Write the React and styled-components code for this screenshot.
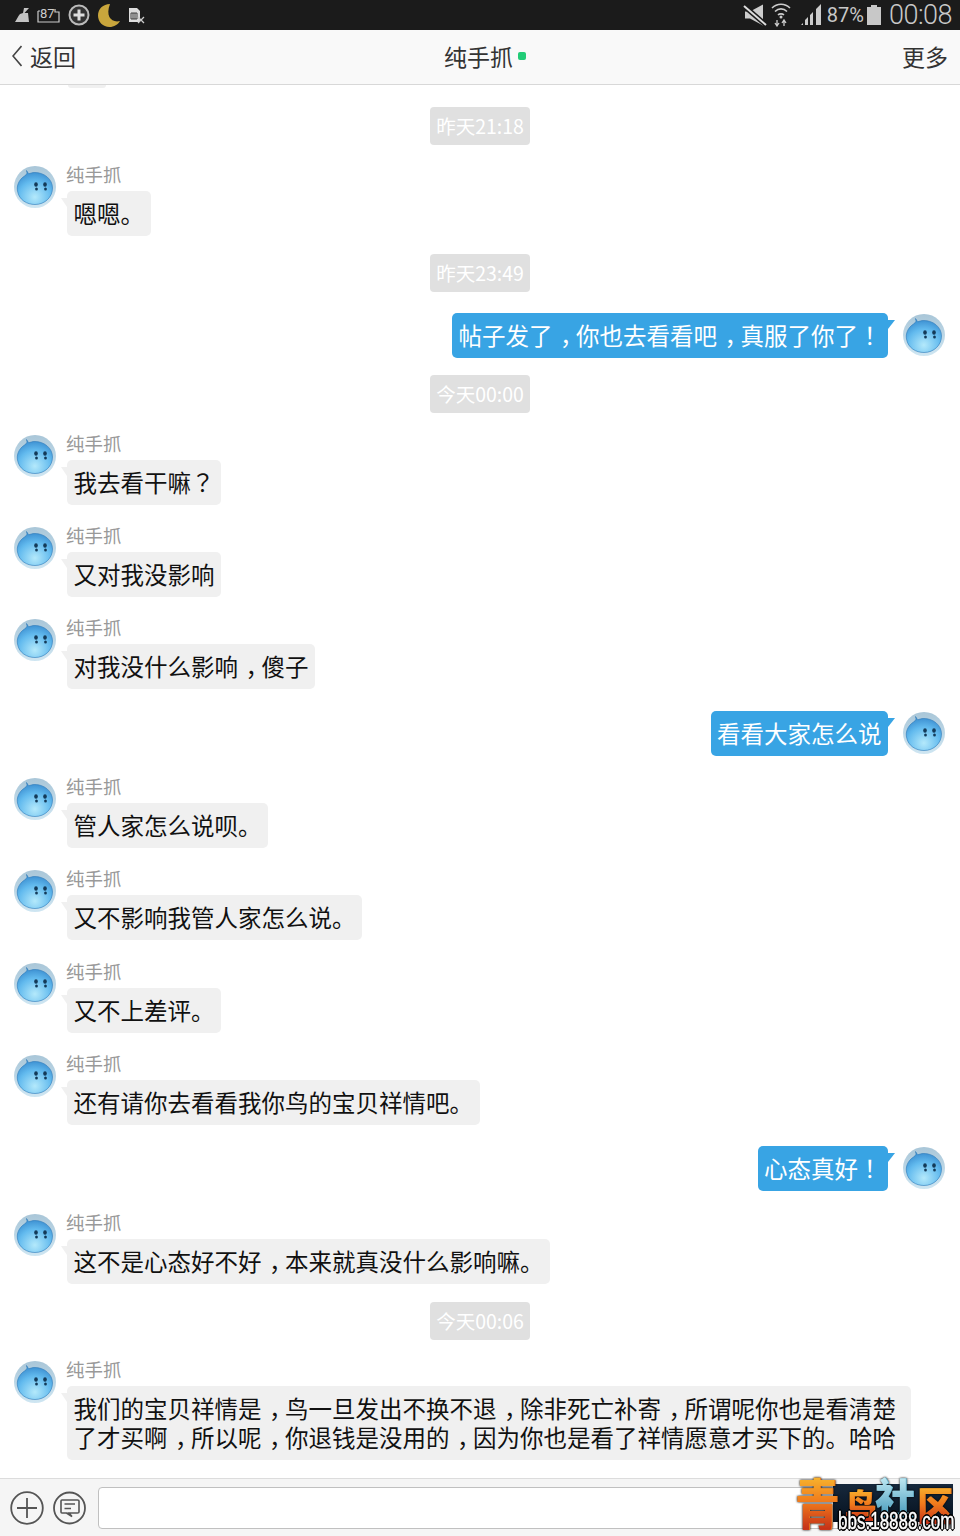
import React from 'react';
import styled, { createGlobalStyle } from 'styled-components';

const CJK = `"Noto Sans CJK SC", "Noto Sans", sans-serif`;

const GlobalStyle = createGlobalStyle`
  html, body {
    margin: 0;
    padding: 0;
    background: #fff;
    overflow: hidden;
  }
  * { box-sizing: border-box; }
`;

const Screen = styled.div`
  position: relative;
  width: 960px;
  height: 1536px;
  display: flex;
  flex-direction: column;
  font-family: ${CJK};
  overflow: hidden;
`;

/* --- status bar --- */
const StatusBar = styled.div`
  height: 30px;
  flex: none;
  background: #1b1b1b;
  color: #c4c4c4;
  display: flex;
  align-items: center;
  justify-content: space-between;
  padding: 0 8px 0 14px;
`;
const StatusGroup = styled.div`
  display: flex;
  align-items: center;
  gap: ${(p) => p.$gap}px;
`;
const StatusIcon = styled.span`
  display: flex;
  margin-right: ${(p) => p.$right}px;
`;
const Percent = styled.span`
  font-family: Roboto, sans-serif;
  font-size: 20px;
  color: #c8c8c8;
  margin-right: 3px;
`;
const Clock = styled.span`
  font-family: Roboto, sans-serif;
  font-weight: 300;
  font-size: 27px;
  line-height: 30px;
  letter-spacing: -0.5px;
  color: #c8c8c8;
  margin-left: 8px;
`;

/* --- nav --- */
const NavBar = styled.div`
  height: 55px;
  flex: none;
  background: #f9f9f9;
  border-bottom: 1px solid #d8d8d8;
  display: flex;
  align-items: center;
  justify-content: space-between;
  padding: 0 12px 2px 12px;
  color: #333;
  font-size: 23px;
`;
const NavBack = styled.div`
  display: flex;
  align-items: center;
  gap: 8px;
  width: 120px;
`;
const NavTitle = styled.div`
  display: flex;
  align-items: center;
  gap: 5px;
  margin-left: 10px;
`;
const OnlineDot = styled.span`
  width: 8px;
  height: 8px;
  border-radius: 2px;
  background: #22cc77;
`;
const NavMore = styled.div`
  width: 120px;
  text-align: right;
`;

/* --- messages --- */
const MessageList = styled.div`
  flex: 1;
  min-height: 0;
  overflow: hidden;
  display: flex;
  flex-direction: column;
  background: #fff;
`;
const ClippedBubble = styled.div`
  flex: none;
  width: 38px;
  height: 3px;
  margin-left: 68px;
  background: #f0f0f0;
  border-radius: 0 0 4px 4px;
`;
const TimePill = styled.div`
  flex: none;
  align-self: center;
  width: 100px;
  height: 38px;
  margin-top: ${(p) => p.$top}px;
  border-radius: 4px;
  background: #e0e0e0;
  color: #fff;
  font-size: 19.5px;
  line-height: 38px;
  text-align: center;
  white-space: nowrap;
`;
const Row = styled.div`
  flex: none;
  display: flex;
  flex-direction: ${(p) => (p.$mine ? 'row-reverse' : 'row')};
  align-items: flex-start;
  gap: ${(p) => (p.$mine ? 15 : 11)}px;
  padding: 0 15px 0 14px;
  margin-top: ${(p) => p.$top}px;
`;
const AvatarSlot = styled.div`
  width: 42px;
  height: 42px;
  flex: none;
  margin-top: ${(p) => (p.$mine ? 1 : 0)}px;
`;
const MessageBody = styled.div`
  display: flex;
  flex-direction: column;
  align-items: flex-start;
  max-width: 844px;
`;
const Name = styled.div`
  height: 25px;
  margin-left: -1px;
  font-size: 18.500px;
  line-height: 17px;
  color: #999;
`;
const Bubble = styled.div`
  position: relative;
  padding: 7.750px 6.500px;
  border-radius: 5px;
  font-size: 23.500px;
  line-height: 29px;
  background: ${(p) => (p.$mine ? '#38a4e4' : '#f0f0f0')};
  color: ${(p) => (p.$mine ? '#fff' : '#111')};
  &::before {
    content: '';
    position: absolute;
    top: 7px;
    ${(p) => (p.$mine ? 'right: -7px;' : 'left: -6px;')}
    border-top: 9px solid ${(p) => (p.$mine ? '#38a4e4' : '#f0f0f0')};
    ${(p) => (p.$mine ? 'border-right: 7px solid transparent;' : 'border-left: 6px solid transparent;')}
  }
`;
/* the phone's font sets the comma in the middle of its cell */
const Comma = styled.span`
  display: inline-block;
  width: 1em;
  transform: translateX(0.32em);
`;
const Bang = styled.span`
  font-family: "Noto Sans CJK TC", sans-serif;
`;

/* --- composer --- */
const Composer = styled.div`
  height: 58px;
  flex: none;
  background: #f5f5f5;
  border-top: 1px solid #dcdcdc;
  display: flex;
  align-items: center;
  padding: 0 10px;
`;
const ComposerIcons = styled.div`
  display: flex;
  align-items: center;
  gap: 9px;
  margin-right: 12px;
`;
const ComposerInput = styled.div`
  flex: 1;
  height: 42px;
  margin-top: 1px;
  background: #fff;
  border: 1px solid #c0c0c0;
  border-radius: 4px;
`;

/* --- watermark --- */
const Watermark = styled.div`
  position: absolute;
  left: 795px;
  top: 1474px;
  width: 160px;
  height: 57px;
  &::before {
    content: '';
    position: absolute;
    left: 38px;
    top: 10px;
    width: 120px;
    height: 38px;
    background: linear-gradient(#16283c, #06121f);
  }
`;
const LogoTitle = styled.div`
  position: relative;
  display: flex;
  align-items: flex-start;
  font-weight: 900;
  white-space: nowrap;
`;
const LogoChar = styled.span`
  flex: none;
  width: ${(p) => p.$w}px;
  margin-left: ${(p) => p.$left}px;
  margin-top: ${(p) => p.$top}px;
  font-size: ${(p) => p.$size}px;
  line-height: ${(p) => p.$size}px;
  text-align: center;
  transform: scaleY(${(p) => p.$stretch});
  transform-origin: top;
  background: linear-gradient(${(p) => (p.$cool ? '#c8eef6, #3d94b8' : '#f8bb30, #f07a1c 50%, #c42e18')});
  -webkit-background-clip: text;
  background-clip: text;
  color: transparent;
  filter: drop-shadow(1px 0 0 ${(p) => (p.$cool ? '#6cb8d2' : '#e8761c')}) drop-shadow(0 0 1px #000);
`;
const LogoUrl = styled.div`
  position: absolute;
  left: 43px;
  top: 34px;
  font-family: "Liberation Sans", sans-serif;
  font-size: 23px;
  line-height: 26px;
  color: #fff;
  -webkit-text-stroke: 0.4px #fff;
  text-shadow: -2px 0 #000, 2px 0 #000, 0 2px #000, 0 -2px #000, -1px -1px #000, 1px 1px #000, 1px -1px #000, -1px 1px #000;
  white-space: nowrap;
  transform: scaleX(0.74);
  transform-origin: left;
`;

/* --- drawn bits --- */
const Avatar = ({ id }) => (
  <svg width="42" height="42" viewBox="0 0 42 42">
    <defs>
      <linearGradient id={`rim${id}`} x1="0" y1="0" x2="0" y2="1">
        <stop offset="0%" stopColor="#a9c6d8" />
        <stop offset="100%" stopColor="#cfe6f2" />
      </linearGradient>
      <radialGradient id={`blob${id}`} cx="50%" cy="78%" r="85%">
        <stop offset="0%" stopColor="#b4e9fb" />
        <stop offset="55%" stopColor="#62baee" />
        <stop offset="100%" stopColor="#2e7fc6" />
      </radialGradient>
    </defs>
    <circle cx="21" cy="21" r="21" fill={`url(#rim${id})`} />
    <path
      d="M12.500 4.500 C13.500 7 13 8.500 10.500 10 C4.500 14 2.500 20 3.500 25 C5 34 13 38.500 21 38.500 C31 38.500 38.500 31 38.500 22 C38.500 13 30 6.500 21 6.500 C18 6.500 16.500 7.200 15 7.800 C14 7 13 5.500 12.500 4.500 Z"
      fill={`url(#blob${id})`}
      stroke="#2b78b8"
      strokeWidth="0.600"
    />
    <ellipse cx="22" cy="18.500" rx="1.800" ry="2.200" fill="#143a58" />
    <ellipse cx="31" cy="18.500" rx="1.800" ry="2.200" fill="#143a58" />
    <ellipse cx="22.500" cy="23" rx="1.400" ry="1.600" fill="#143a58" />
    <ellipse cx="31.500" cy="23" rx="1.400" ry="1.600" fill="#143a58" />
  </svg>
);

const BackChevron = () => (
  <svg width="10" height="22" viewBox="0 0 10 22">
    <path d="M9.500 1 L1 11 L9.500 21" fill="none" stroke="#444" strokeWidth="1.600" />
  </svg>
);

const CleanIcon = () => (
  <svg width="16" height="16" viewBox="0 0 16 16">
    <path d="M10 1 L15 1 L10.500 6 L14 6 L15 15 L1 15 C3 12 4 9 6 7 L9 6 Z" fill="#c4c4c4" />
  </svg>
);
const BatteryBox = () => (
  <svg width="24" height="16" viewBox="0 0 24 16">
    <path d="M1 4 L1 15 L22 15 L22 5 L18 5 L18 2 M1 4 L3 4" fill="none" stroke="#ccc" strokeWidth="1.200" />
    <text x="3" y="11" fontFamily="Roboto, sans-serif" fontSize="13" fill="#ccc">87</text>
  </svg>
);
const PlusBadge = () => (
  <svg width="22" height="22" viewBox="0 0 22 22">
    <circle cx="11" cy="11" r="9.500" fill="#333" stroke="#bbb" strokeWidth="2" />
    <path d="M11 5.500 V16.500 M5.500 11 H16.500" stroke="#ddd" strokeWidth="3" />
  </svg>
);
const Moon = () => (
  <svg width="24" height="24" viewBox="0 0 24 24">
    <path d="M13 1 C6 1 1 6 1 12.500 C1 19 6 24 12.500 24 C17 24 21 21.500 23 18 C15 20 8 14 13 1 Z" fill="#c9a63c" />
  </svg>
);
const SimIcon = () => (
  <svg width="17" height="17" viewBox="0 0 17 17">
    <path d="M1 1 H9 L12 4 V15 H1 Z" fill="#ddd" />
    <path d="M3 6 H9 V12 H3 Z M5 6 V12 M7 6 V12" fill="none" stroke="#333" strokeWidth="0.900" />
    <path d="M10 10 L16 16 M16 10 L10 16" stroke="#ccc" strokeWidth="1.300" />
  </svg>
);
const MuteIcon = () => (
  <svg width="24" height="24" viewBox="0 0 24 24">
    <path d="M2 7 H7 L20 0 V21 L7 14 H2 Z" fill="#ccc" transform="translate(0 1.500)" />
    <path d="M1 3 L23 22" stroke="#1b1b1b" strokeWidth="5" />
    <path d="M1 3 L23 22" stroke="#ddd" strokeWidth="2" />
  </svg>
);
const WifiIcon = () => (
  <svg width="20" height="24" viewBox="0 0 20 24">
    <path d="M1 5 C6 0 14 0 19 5 M4 8.500 C7.500 5 12.500 5 16 8.500 M7 12 C8.500 10.500 11.500 10.500 13 12" fill="none" stroke="#ccc" strokeWidth="1.600" />
    <circle cx="10" cy="14" r="1.500" fill="#ccc" />
    <path d="M6 17 V22 M4 20 L6 23 L8 20 M13 23 V18 M11 20 L13 17 L15 20" fill="none" stroke="#ccc" strokeWidth="1.300" />
  </svg>
);
const SignalIcon = () => (
  <svg width="21" height="22" viewBox="0 0 21 22">
    <path d="M0 21 L2 19 V21 Z M4 21 V16 L7 13 V21 Z M9 21 V11 L12 8 V21 Z M15 21 V5 L20 0 V21 Z" fill="#ccc" />
  </svg>
);
const BatteryIcon = () => (
  <svg width="14" height="20" viewBox="0 0 14 20">
    <path d="M4 0 H10 V2 H14 V20 H0 V2 H4 Z" fill="#c8c8c8" />
  </svg>
);
const PlusIcon = () => (
  <svg width="34" height="34" viewBox="0 0 34 34">
    <circle cx="17" cy="17" r="15.800" fill="none" stroke="#555" strokeWidth="1.800" />
    <path d="M17 7 V27 M7 17 H27" stroke="#555" strokeWidth="1.800" />
  </svg>
);
const ChatIcon = () => (
  <svg width="33" height="34" viewBox="0 0 33 34">
    <circle cx="16.500" cy="17" r="15.500" fill="none" stroke="#555" strokeWidth="1.800" />
    <path d="M8 10 Q8 9 9 9 H24.500 Q26 9 26 10 V21 Q26 22 24.500 22 H16 L19 25.500 L13.500 22 H9 Q8 22 8 21 Z" fill="none" stroke="#555" strokeWidth="1.600" />
    <path d="M11.500 13 H22 M11.500 17.500 H18" stroke="#555" strokeWidth="1.600" />
  </svg>
);

const withPunct = (text) =>
  text.split(/([，！？])/).map((part, i) => {
    if (part === '，') return <Comma key={i}>{part}</Comma>;
    if (part === '！' || part === '？') return <Bang key={i}>{part}</Bang>;
    return part;
  });

const messages = [
  { type: 'time', text: '昨天21:18', top: 19 },
  { type: 'in', text: '嗯嗯。', top: 21 },
  { type: 'time', text: '昨天23:49', top: 18.5 },
  { type: 'out', text: '帖子发了，你也去看看吧，真服了你了！', top: 21 },
  { type: 'time', text: '今天00:00', top: 17.5 },
  { type: 'in', text: '我去看干嘛？', top: 22 },
  { type: 'in', text: '又对我没影响', top: 22.5 },
  { type: 'in', text: '对我没什么影响，傻子', top: 22.5 },
  { type: 'out', text: '看看大家怎么说', top: 22.5 },
  { type: 'in', text: '管人家怎么说呗。', top: 22.5 },
  { type: 'in', text: '又不影响我管人家怎么说。', top: 22.5 },
  { type: 'in', text: '又不上差评。', top: 23.5 },
  { type: 'in', text: '还有请你去看看我你鸟的宝贝祥情吧。', top: 22.5 },
  { type: 'out', text: '心态真好！', top: 21.5 },
  { type: 'in', text: '这不是心态好不好，本来就真没什么影响嘛。', top: 23.5 },
  { type: 'time', text: '今天00:06', top: 18.5 },
  {
    type: 'in',
    text: '我们的宝贝祥情是，鸟一旦发出不换不退，除非死亡补寄，所谓呢你也是看清楚了才买啊，所以呢，你退钱是没用的，因为你也是看了祥情愿意才买下的。哈哈',
    top: 21,
  },
];

const App = () => (
  <>
    <GlobalStyle />
    <Screen>
      <StatusBar>
        <StatusGroup $gap={7}>
          <CleanIcon />
          <BatteryBox />
          <PlusBadge />
          <Moon />
          <SimIcon />
        </StatusGroup>
        <StatusGroup $gap={0}>
          <StatusIcon $right={4}><MuteIcon /></StatusIcon>
          <StatusIcon $right={10}><WifiIcon /></StatusIcon>
          <StatusIcon $right={5}><SignalIcon /></StatusIcon>
          <Percent>87%</Percent>
          <BatteryIcon />
          <Clock>00:08</Clock>
        </StatusGroup>
      </StatusBar>

      <NavBar>
        <NavBack>
          <BackChevron />
          返回
        </NavBack>
        <NavTitle>
          纯手抓
          <OnlineDot />
        </NavTitle>
        <NavMore>更多</NavMore>
      </NavBar>

      <MessageList>
        <ClippedBubble />
        {messages.map((m, i) => {
          if (m.type === 'time') {
            return <TimePill key={i} $top={m.top}>{m.text}</TimePill>;
          }
          const mine = m.type === 'out';
          return (
            <Row key={i} $mine={mine} $top={m.top}>
              <AvatarSlot $mine={mine}>
                <Avatar id={i} />
              </AvatarSlot>
              <MessageBody>
                {!mine && <Name>纯手抓</Name>}
                <Bubble $mine={mine}>{withPunct(m.text)}</Bubble>
              </MessageBody>
            </Row>
          );
        })}
      </MessageList>

      <Composer>
        <ComposerIcons>
          <PlusIcon />
          <ChatIcon />
        </ComposerIcons>
        <ComposerInput />
      </Composer>

      <Watermark>
        <LogoTitle>
          <LogoChar $w={43} $left={0} $size={44} $top={0} $stretch={1.27}>青</LogoChar>
          <LogoChar $w={30} $left={7} $size={31} $top={13} $stretch={1.1}>鸟</LogoChar>
          <LogoChar $w={40} $left={0} $size={40} $top={1} $stretch={1.1} $cool>社</LogoChar>
          <LogoChar $w={34} $left={2} $size={36} $top={9} $stretch={1.15}>区</LogoChar>
        </LogoTitle>
        <LogoUrl>bbs.18888.com</LogoUrl>
      </Watermark>
    </Screen>
  </>
);

export default App;
